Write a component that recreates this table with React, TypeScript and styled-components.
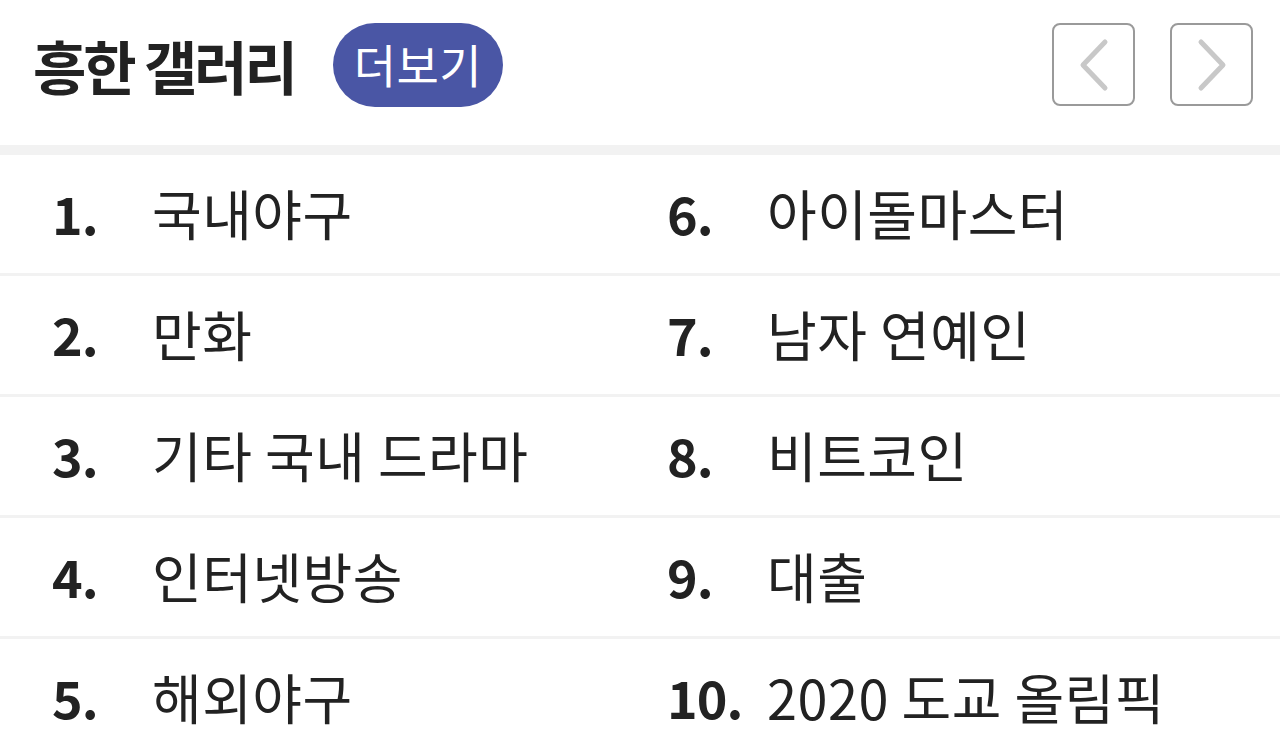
import React from "react";
import styled, { createGlobalStyle } from "styled-components";

const GlobalStyle = createGlobalStyle`
  html, body {
    margin: 0;
    padding: 0;
    background: #ffffff;
  }
  body {
    font-family: "Noto Sans CJK KR", "Noto Sans", sans-serif;
    color: #222222;
  }
`;

const galleries = [
  "국내야구",
  "만화",
  "기타 국내 드라마",
  "인터넷방송",
  "해외야구",
  "아이돌마스터",
  "남자 연예인",
  "비트코인",
  "대출",
  "2020 도교 올림픽",
];

const ChevronLeft = () => (
  <svg width="32" height="54" viewBox="0 0 32 54" fill="none">
    <path
      d="M27 4 L5 27 L27 50"
      stroke="#c8c8c8"
      strokeWidth="5"
      strokeLinecap="round"
      strokeLinejoin="round"
    />
  </svg>
);

const ChevronRight = () => (
  <svg width="32" height="54" viewBox="0 0 32 54" fill="none">
    <path
      d="M5 4 L27 27 L5 50"
      stroke="#c8c8c8"
      strokeWidth="5"
      strokeLinecap="round"
      strokeLinejoin="round"
    />
  </svg>
);

const App: React.FC = () => {
  const rows = [0, 1, 2, 3, 4].map((i) => [i, i + 5]);

  return (
    <Page>
      <GlobalStyle />
      <Header>
        <Title>흥한 갤러리</Title>
        <MoreButton>더보기</MoreButton>
        <Nav>
          <NavButton aria-label="이전">
            <ChevronLeft />
          </NavButton>
          <NavButton aria-label="다음">
            <ChevronRight />
          </NavButton>
        </Nav>
      </Header>
      <Divider />
      <List>
        {rows.map((pair) => (
          <Row key={pair[0]}>
            {pair.map((idx) => (
              <Item key={idx}>
                <Rank>{idx + 1}.</Rank>
                <Name>{galleries[idx]}</Name>
              </Item>
            ))}
          </Row>
        ))}
      </List>
    </Page>
  );
};

export default App;

const Page = styled.div`
  width: 1280px;
  height: 745px;
  overflow: hidden;
  background: #ffffff;
`;

const Header = styled.div`
  height: 145px;
  display: flex;
  align-items: center;
  padding: 0 27px 16px 33px;
  box-sizing: border-box;
`;

const Title = styled.h1`
  margin: 0;
  font-size: 58px;
  font-weight: 700;
  letter-spacing: -3px;
  color: #222222;
  line-height: 1;
`;

const MoreButton = styled.button`
  margin-left: 38px;
  width: 170px;
  height: 84px;
  border: 0;
  border-radius: 42px;
  background: #4a56a5;
  color: #ffffff;
  font-family: "Noto Sans CJK KR", "Noto Sans", sans-serif;
  font-size: 46px;
  font-weight: 400;
  letter-spacing: 0.5px;
  padding: 0 0 4px;
  cursor: pointer;
`;

const Nav = styled.div`
  margin-left: auto;
  display: flex;
  gap: 35px;
`;

const NavButton = styled.button`
  width: 83px;
  height: 83px;
  box-sizing: border-box;
  border: 2px solid #9a9a9a;
  border-radius: 8px;
  background: #ffffff;
  display: flex;
  align-items: center;
  justify-content: center;
  padding: 0;
  cursor: pointer;
`;

const Divider = styled.div`
  height: 10px;
  background: #f2f2f2;
`;

const List = styled.div`
  display: flex;
  flex-direction: column;
`;

const Row = styled.div`
  display: grid;
  grid-template-columns: 615px 1fr;
  padding-left: 52px;
  height: 121px;
  box-sizing: border-box;
  border-bottom: 3px solid #f2f2f2;
`;

const Item = styled.div`
  display: flex;
  align-items: center;
  padding-bottom: 4px;
`;

const Rank = styled.span`
  min-width: 86px;
  margin-right: 14px;
  flex-shrink: 0;
  font-size: 52px;
  font-weight: 700;
  letter-spacing: -1px;
  color: #222222;
`;

const Name = styled.span`
  font-size: 54px;
  font-weight: 400;
  letter-spacing: 0.5px;
  color: #222222;
  white-space: nowrap;
`;
